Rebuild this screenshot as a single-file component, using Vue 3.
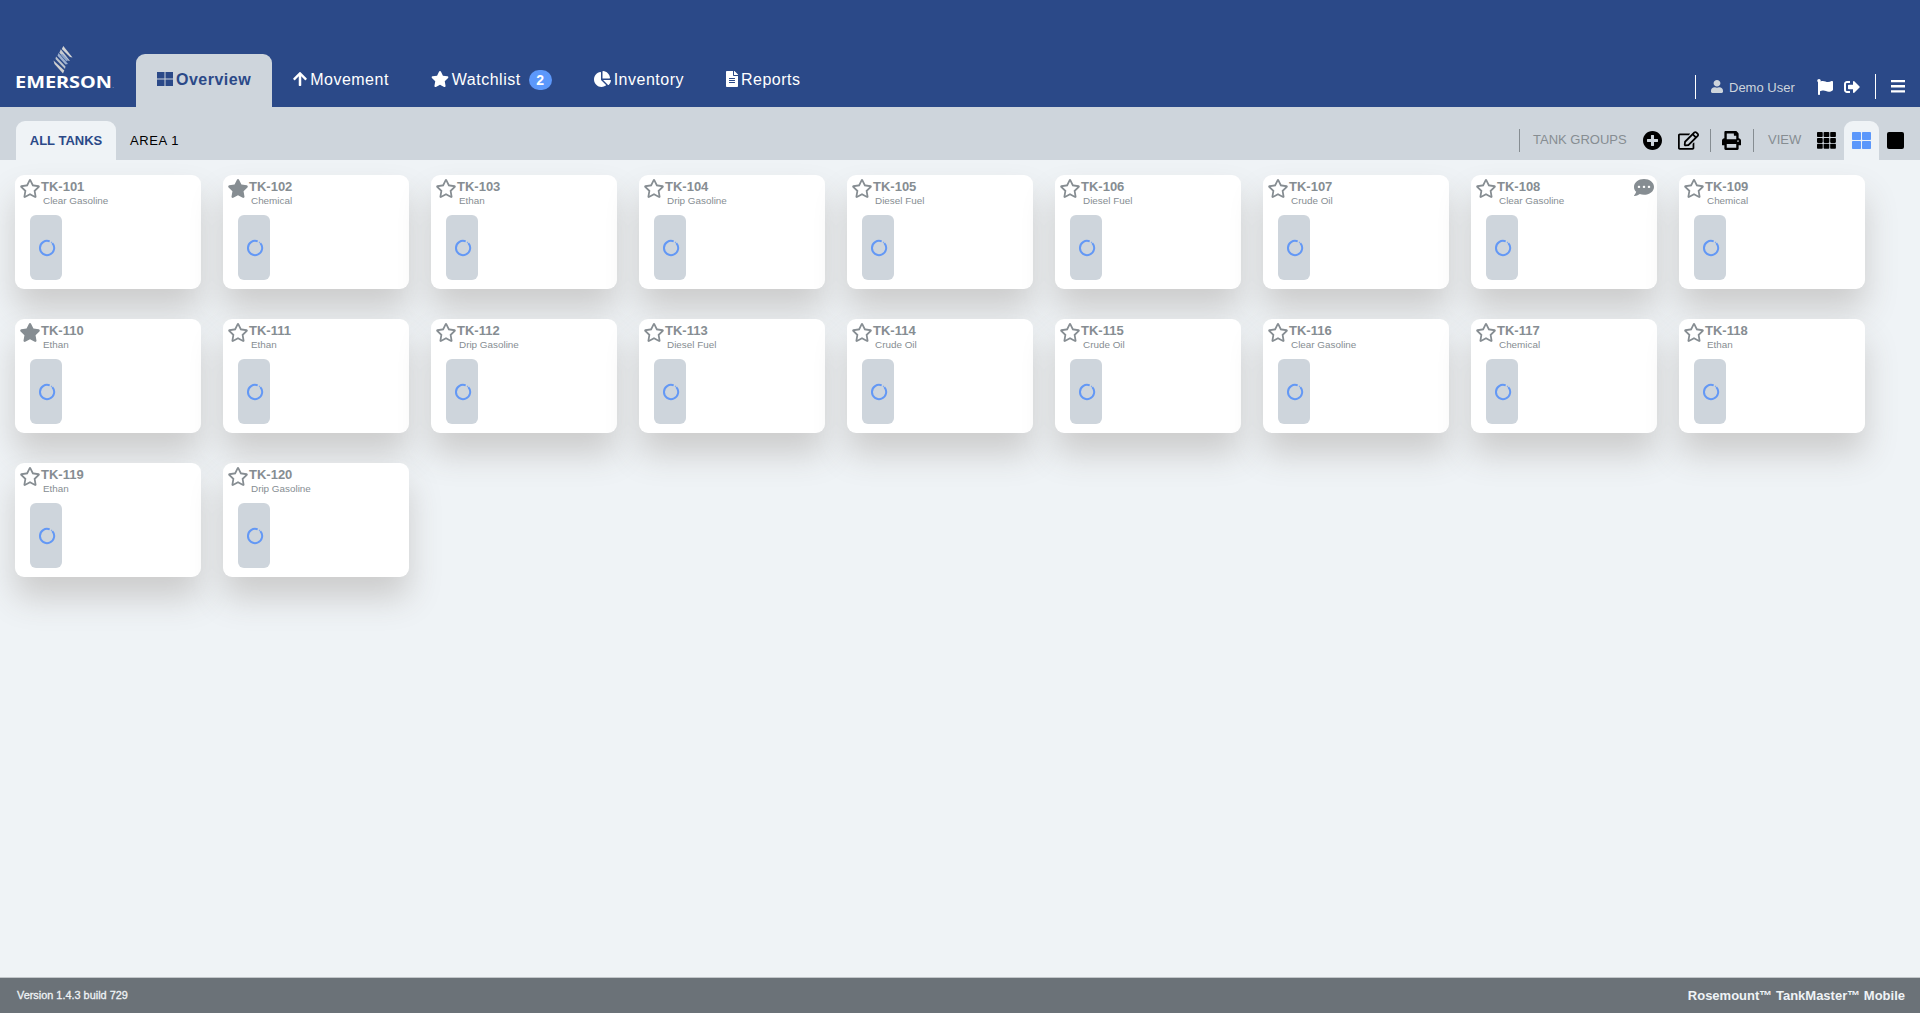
<script setup>
const products = [
  'Clear Gasoline', 'Chemical', 'Ethan', 'Drip Gasoline', 'Diesel Fuel',
  'Diesel Fuel', 'Crude Oil', 'Clear Gasoline', 'Chemical', 'Ethan',
  'Ethan', 'Drip Gasoline', 'Diesel Fuel', 'Crude Oil', 'Crude Oil',
  'Clear Gasoline', 'Chemical', 'Ethan', 'Ethan', 'Drip Gasoline',
]
const tanks = products.map((product, i) => ({
  name: `TK-${101 + i}`,
  product,
  starred: i === 1 || i === 9,
  comment: i === 7,
}))

const starSolid =
  'M259.3 17.8L194 150.2 47.9 171.5c-26.2 3.8-36.7 36.1-17.7 54.6l105.7 103-25 145.5c-4.5 26.3 23.2 46 46.4 33.7L288 439.6l130.7 68.7c23.2 12.2 50.9-7.4 46.4-33.7l-25-145.5 105.7-103c19-18.5 8.5-50.8-17.7-54.6L382 150.2 316.7 17.8c-11.7-23.6-45.6-23.9-57.4 0z'
const starOutline =
  'M528.1 171.5L382 150.2 316.7 17.8c-11.7-23.6-45.6-23.9-57.4 0L194 150.2 47.9 171.5c-26.2 3.8-36.7 36.1-17.7 54.6l105.7 103-25 145.5c-4.5 26.3 23.2 46 46.4 33.7L288 439.6l130.7 68.7c23.2 12.2 50.9-7.4 46.4-33.7l-25-145.5 105.7-103c19-18.5 8.5-50.8-17.7-54.6zM388.6 312.3l23.7 138.4L288 385.4l-124.3 65.3 23.7-138.4-100.6-98 139-20.2 62.2-126 62.2 126 139 20.2-100.6 98z'
</script>

<template>
  <div class="app">
    <header class="header">
      <svg class="logo" width="104" height="46" viewBox="0 0 104 46">
        <path d="M48.300 1L57.500 12.500 55 12 46.800 4z" fill="#d3d3d3" />
        <path d="M45.800 4.200L55 16 52 15.200 44.300 7.800z" fill="#c5c9cf" />
        <path d="M43.500 8L53 19 50.500 19.500 42.500 10.800z" fill="#9cb0cf" />
        <path d="M47.500 9L53 14.500 51.500 16.500 45.500 9.500z" fill="#8aa3cb" />
        <path d="M41 11.500L50.500 21.500 50 24 40.500 14z" fill="#bcc3cc" />
        <path d="M38.500 15.500L49.300 25.500 48 28.500 39.500 19z" fill="#d0d0d0" />
        <text x="0" y="42.500" textLength="97" lengthAdjust="spacingAndGlyphs" class="logo-text">EMERSON</text>
        <text x="97" y="42.500" class="logo-tm">.</text>
      </svg>
      <nav class="nav">
        <a class="nav-tab active">
          <svg width="16" height="14" viewBox="0 0 16 14"><path d="M0 0h7.500v6.500H0zM8.500 0H16v6.500H8.500zM0 7.500h7.500V14H0zM8.500 7.500H16V14H8.500z" fill="currentColor" /></svg>
          <span>Overview</span>
        </a>
        <a class="nav-tab">
          <svg width="14" height="16" viewBox="0 0 448 512"><path fill="currentColor" d="M34.900 289.500l-22.200-22.200c-9.400-9.400-9.400-24.600 0-33.900L207 39c9.400-9.400 24.600-9.400 33.900 0l194.300 194.300c9.400 9.400 9.400 24.600 0 33.900L413 289.400c-9.500 9.500-25 9.300-34.300-.4L264 168.600V456c0 13.300-10.700 24-24 24h-32c-13.300 0-24-10.700-24-24V168.600L69.200 289.100c-9.300 9.800-24.800 10-34.300.4z" /></svg>
          <span>Movement</span>
        </a>
        <a class="nav-tab">
          <svg width="18" height="16" viewBox="0 0 576 512"><path fill="currentColor" :d="starSolid" /></svg>
          <span>Watchlist</span>
          <b class="badge">2</b>
        </a>
        <a class="nav-tab">
          <svg width="17" height="16" viewBox="0 0 544 512"><path fill="currentColor" d="M527.790 288H290.500l158.030 158.030c6.040 6.040 15.980 6.530 22.190.68 38.700-36.460 65.320-85.610 73.130-140.860 1.340-9.460-6.510-17.850-16.060-17.850zm-15.830-64.800C503.720 103.740 408.260 8.280 288.800.04 279.680-.59 272 7.100 272 16.240V240h223.770c9.140 0 16.820-7.680 16.190-16.800zM224 288V50.710c0-9.550-8.390-17.400-17.840-16.060C86.990 51.490-4.100 155.600.14 280.370 4.500 408.510 114.830 513.590 243.030 511.980c50.400-.63 96.970-16.870 135.260-44.030 7.900-5.600 8.420-17.230 1.570-24.080L224 288z" /></svg>
          <span>Inventory</span>
        </a>
        <a class="nav-tab">
          <svg width="12" height="16" viewBox="0 0 384 512"><path fill="currentColor" d="M224 136V0H24C10.700 0 0 10.700 0 24v464c0 13.300 10.700 24 24 24h336c13.300 0 24-10.700 24-24V160H248c-13.200 0-24-10.800-24-24zm64 236c0 6.600-5.400 12-12 12H108c-6.600 0-12-5.400-12-12v-8c0-6.600 5.400-12 12-12h168c6.600 0 12 5.400 12 12v8zm0-64c0 6.600-5.400 12-12 12H108c-6.600 0-12-5.400-12-12v-8c0-6.600 5.400-12 12-12h168c6.600 0 12 5.400 12 12v8zm0-72v8c0 6.600-5.400 12-12 12H108c-6.600 0-12-5.400-12-12v-8c0-6.600 5.400-12 12-12h168c6.600 0 12 5.400 12 12zm96-114.100v6.100H256V0h6.100c6.400 0 12.500 2.500 17 7l97.900 98c4.500 4.500 7 10.600 7 16.900z" /></svg>
          <span>Reports</span>
        </a>
      </nav>
      <div class="account">
        <div class="user">
          <svg width="12" height="13" viewBox="0 0 448 512" preserveAspectRatio="none"><path fill="currentColor" d="M224 256c70.700 0 128-57.300 128-128S294.700 0 224 0 96 57.300 96 128s57.300 128 128 128zm89.600 32h-16.700c-22.200 10.200-46.900 16-72.900 16s-50.600-5.800-72.900-16h-16.700C60.200 288 0 348.200 0 422.400V464c0 26.500 21.500 48 48 48h352c26.500 0 48-21.500 48-48v-41.600c0-74.200-60.200-134.400-134.400-134.400z" /></svg>
          <span>Demo User</span>
        </div>
        <svg class="flag" width="16" height="16" viewBox="0 0 512 512"><path fill="currentColor" d="M349.565 98.783C295.978 98.783 251.721 64 184.348 64c-24.955 0-47.309 4.384-68.045 12.013a55.947 55.947 0 0 0 3.586-23.562C118.117 24.015 94.806 1.206 66.338.048 34.345-1.254 8 24.296 8 56c0 19.026 9.497 35.825 24 45.945V488c0 13.255 10.745 24 24 24h16c13.255 0 24-10.745 24-24v-94.400c28.311-12.064 63.582-22.122 114.435-22.122 53.588 0 97.844 34.783 165.217 34.783 48.169 0 86.667-16.294 122.505-40.858C506.840 359.452 512 349.571 512 339.045v-243.100c0-23.393-24.269-38.870-45.485-29.016-34.338 15.948-76.454 31.854-116.950 31.854z" /></svg>
        <svg class="signout" width="16" height="16" viewBox="0 0 512 512"><path fill="currentColor" d="M497 273L329 441c-15 15-41 4.500-41-17v-96H152c-13.300 0-24-10.700-24-24v-96c0-13.300 10.700-24 24-24h136V88c0-21.400 25.900-32 41-17l168 168c9.300 9.400 9.300 24.600 0 34zM192 436v-40c0-6.600-5.400-12-12-12H96c-17.700 0-32-14.300-32-32V160c0-17.700 14.300-32 32-32h84c6.600 0 12-5.400 12-12V76c0-6.600-5.400-12-12-12H96c-53 0-96 43-96 96v192c0 53 43 96 96 96h84c6.600 0 12-5.400 12-12z" /></svg>
        <div class="menu">
          <svg width="14" height="13" viewBox="0 0 14 13"><path fill="currentColor" d="M0 0h14v2.300H0zM0 5.100h14v2.300H0zM0 10.300h14v2.300H0z" /></svg>
        </div>
      </div>
    </header>

    <div class="toolbar">
      <div class="groups">
        <a class="group active">ALL TANKS</a>
        <a class="group area">AREA 1</a>
      </div>
      <div class="tools">
        <i class="rule"></i>
        <span class="label tank-groups">TANK GROUPS</span>
        <svg class="plus" width="19" height="19" viewBox="0 0 496 496"><path fill="currentColor" d="M248 0C111 0 0 111 0 248s111 248 248 248 248-111 248-248S385 0 248 0zm144 276c0 6.600-5.400 12-12 12h-92v92c0 6.600-5.400 12-12 12h-56c-6.600 0-12-5.400-12-12v-92h-92c-6.600 0-12-5.400-12-12v-56c0-6.600 5.400-12 12-12h92v-92c0-6.600 5.400-12 12-12h56c6.600 0 12 5.400 12 12v92h92c6.600 0 12 5.400 12 12v56z" /></svg>
        <svg class="edit" width="21" height="19" viewBox="0 0 576 512"><path fill="currentColor" d="M402.300 344.900l32-32c5-5 13.700-1.500 13.700 5.700V464c0 26.500-21.500 48-48 48H48c-26.500 0-48-21.500-48-48V112c0-26.500 21.500-48 48-48h273.500c7.100 0 10.700 8.600 5.700 13.700l-32 32c-1.500 1.500-3.500 2.300-5.700 2.300H48v352h352V350.500c0-2.100.8-4.100 2.300-5.600zm156.600-201.800L296.300 405.700l-90.400 10c-26.200 2.900-48.500-19.200-45.600-45.600l10-90.400L432.900 17.100c22.900-22.900 59.900-22.900 82.700 0l43.200 43.200c22.900 22.900 22.900 60 .1 82.800zM460.100 174L402 115.900 216.200 301.800l-7.300 65.300 65.300-7.300L460.100 174zm64.800-79.700l-43.200-43.200c-4.100-4.100-10.800-4.100-14.800 0L436 82l58.100 58.100 30.900-30.900c4-4.200 4-10.800-.1-14.900z" /></svg>
        <i class="rule"></i>
        <svg class="print" width="19" height="19" viewBox="0 0 512 512"><path fill="currentColor" d="M448 192V77.250c0-8.490-3.370-16.620-9.370-22.630L393.370 9.370c-6-6-14.140-9.370-22.630-9.370H96C78.330 0 64 14.330 64 32v160c-35.350 0-64 28.650-64 64v112c0 8.840 7.160 16 16 16h48v96c0 17.670 14.330 32 32 32h320c17.670 0 32-14.330 32-32v-96h48c8.840 0 16-7.160 16-16V256c0-35.350-28.650-64-64-64zm-64 256H128v-96h256v96zm0-224H128V64h192v48c0 8.840 7.160 16 16 16h48v96zm48 72c-13.250 0-24-10.750-24-24 0-13.260 10.750-24 24-24s24 10.740 24 24c0 13.250-10.750 24-24 24z" /></svg>
        <i class="rule"></i>
        <span class="label view">VIEW</span>
        <svg class="small" width="19" height="17" viewBox="0 0 19 17">
          <g fill="currentColor">
            <template v-for="r in 3" :key="r">
              <rect v-for="c in 3" :key="c" :x="(c - 1) * 6.600" :y="(r - 1) * 5.900" width="5.700" height="5" rx=".8" />
            </template>
          </g>
        </svg>
        <div class="view-tab">
          <svg width="19" height="17" viewBox="0 0 19 17"><g fill="currentColor"><rect width="9" height="8" rx=".8" /><rect x="10" width="9" height="8" rx=".8" /><rect y="9" width="9" height="8" rx=".8" /><rect x="10" y="9" width="9" height="8" rx=".8" /></g></svg>
        </div>
        <svg class="large" width="17" height="17" viewBox="0 0 17 17"><rect width="17" height="17" rx="2" fill="currentColor" /></svg>
      </div>
    </div>

    <main class="grid">
      <article v-for="t in tanks" :key="t.name" class="card">
        <div class="card-head">
          <svg class="star" width="20" height="19" viewBox="14 0 548 512" preserveAspectRatio="none"><path fill="currentColor" :d="t.starred ? starSolid : starOutline" /></svg>
          <div class="titles">
            <h3>{{ t.name }}</h3>
            <p>{{ t.product }}</p>
          </div>
          <svg v-if="t.comment" class="comment" width="20" height="17" viewBox="0 32 512 448" preserveAspectRatio="none"><path fill="currentColor" d="M256 32C114.600 32 0 125.100 0 240c0 49.600 21.400 95 57 130.700C44.500 421.100 2.700 466 2.200 466.500c-2.200 2.300-2.800 5.700-1.500 8.700S4.800 480 8 480c66.300 0 116-31.800 140.600-51.400 32.700 12.300 69 19.400 107.400 19.400 141.400 0 256-93.100 256-208S397.400 32 256 32zM128 272c-17.700 0-32-14.300-32-32s14.300-32 32-32 32 14.300 32 32-14.300 32-32 32zm128 0c-17.700 0-32-14.300-32-32s14.300-32 32-32 32 14.300 32 32-14.300 32-32 32zm128 0c-17.700 0-32-14.300-32-32s14.300-32 32-32 32 14.300 32 32-14.300 32-32 32z" /></svg>
        </div>
        <div class="tank">
          <svg width="18" height="18" viewBox="0 0 18 18"><path d="M14.300 4.200A7.100 7.100 0 1 1 11.700 2.400" fill="none" stroke="#6398f5" stroke-width="2" /><path d="M13.200 3.200l.5.400" stroke="#6398f5" stroke-width="1.600" /></svg>
        </div>
      </article>
    </main>

    <footer class="footer">
      <span class="version">Version 1.4.3 build 729</span>
      <span class="product">Rosemount™ TankMaster™ Mobile</span>
    </footer>
  </div>
</template>

<style>
body {
  margin: 0;
  background: #eff3f6;
}
</style>

<style scoped>
.app {
  height: 100vh;
  display: flex;
  flex-direction: column;
  overflow: hidden;
  background: #eff3f6;
  font-family: "Liberation Sans", Arial, sans-serif;
  font-size: 13px;
}
svg {
  display: block;
  flex: none;
}
.header {
  height: 107px;
  flex: none;
  display: flex;
  align-items: flex-end;
  background: #2b4988;
  color: #fff;
}
.logo {
  margin: 0 17px 16px 15px;
}
.logo-text {
  font: 700 15.500px "Noto Sans", sans-serif;
  fill: #fff;
}
.logo-tm {
  font-size: 8px;
  fill: #8ea0c4;
}
.nav {
  display: flex;
}
.nav-tab {
  height: 53px;
  box-sizing: border-box;
  padding: 0 21px 3px;
  display: flex;
  align-items: center;
  gap: 3px;
  font-size: 16px;
  letter-spacing: 0.5px;
}
.nav-tab span {
  padding-top: 1px;
}
.nav-tab.active {
  background: #ced5dc;
  color: #2b4988;
  font-weight: 700;
  border-radius: 9px 9px 0 0;
}
.badge {
  width: 23px;
  height: 20px;
  margin-left: 5px;
  margin-top: 1px;
  border-radius: 10px;
  background: #5c98fb;
  font-size: 14px;
  line-height: 20px;
  letter-spacing: 0;
  text-align: center;
}
.account {
  margin-left: auto;
  margin-bottom: 8px;
  height: 25px;
  display: flex;
  align-items: center;
  padding-right: 15px;
}
.user {
  height: 24px;
  display: flex;
  align-items: center;
  gap: 6px;
  padding-left: 15px;
  margin-right: 21px;
  border-left: 1px solid #fff;
  color: #ced5dc;
}
.user span {
  width: 67px;
  padding-top: 2px;
}
.signout {
  margin: 0 15px 0 11px;
}
.menu {
  height: 25px;
  display: flex;
  align-items: center;
  padding-left: 15px;
  border-left: 1px solid #fff;
}
.toolbar {
  height: 53px;
  flex: none;
  display: flex;
  align-items: flex-end;
  justify-content: space-between;
  background: #ced5dc;
}
.groups {
  display: flex;
  padding-left: 16px;
}
.group {
  height: 39px;
  line-height: 39px;
  font-size: 13px;
}
.group.active {
  width: 100px;
  border-radius: 9px 9px 0 0;
  background: #eff3f6;
  color: #2b4988;
  font-weight: 700;
  text-align: center;
}
.group.area {
  padding-left: 14px;
  letter-spacing: 0.600px;
}
.tools {
  height: 39px;
  display: flex;
  align-items: center;
  padding-right: 16px;
}
.rule {
  width: 1px;
  height: 23px;
  background: #868d92;
}
.label {
  color: #868d92;
  padding-bottom: 2px;
}
.tank-groups {
  width: 95px;
  margin: 0 15px 0 13px;
  white-space: nowrap;
}
.edit {
  margin: 0 11px 0 16px;
}
.print {
  margin: 0 12px 0 11px;
}
.view {
  width: 34px;
  margin: 0 15px 0 14px;
}
.view-tab {
  width: 35px;
  height: 39px;
  margin: 0 8px;
  display: flex;
  align-items: center;
  justify-content: center;
  border-radius: 9px 9px 0 0;
  background: #eff3f6;
  color: #5c98fb;
}
.grid {
  flex: 1;
  display: grid;
  grid-template-columns: repeat(9, 186px);
  grid-auto-rows: 114px;
  gap: 30px 22px;
  padding: 15px;
}
.card {
  border-radius: 9px;
  background: #fff;
  color: #868d92;
  box-shadow: 0 21px 33px #ccc;
}
.card-head {
  height: 40px;
  display: flex;
  align-items: flex-start;
  padding: 4px 3px 0 5px;
  box-sizing: border-box;
}
.titles {
  flex: 1;
  padding-left: 1px;
}
h3 {
  margin: 0;
  font-size: 13px;
  line-height: 15px;
}
p {
  margin: 0 0 0 2px;
  font-size: 9.900px;
  line-height: 14px;
}
.tank {
  width: 32px;
  height: 65px;
  margin-left: 15px;
  border-radius: 6px;
  background: #ced5dc;
  display: flex;
  align-items: center;
  justify-content: center;
}
.tank svg {
  margin: 1px 0 0 2px;
}
.footer {
  height: 35px;
  flex: none;
  display: flex;
  align-items: center;
  justify-content: space-between;
  padding: 0 15px 0 17px;
  border-top: 1px solid #c3c7ca;
  background: #6b7278;
  color: #eff3f6;
}
.version {
  font-size: 10.900px;
  padding-bottom: 1px;
  -webkit-text-stroke: 0.300px #eff3f6;
}
.product {
  font-weight: 700;
}
</style>
